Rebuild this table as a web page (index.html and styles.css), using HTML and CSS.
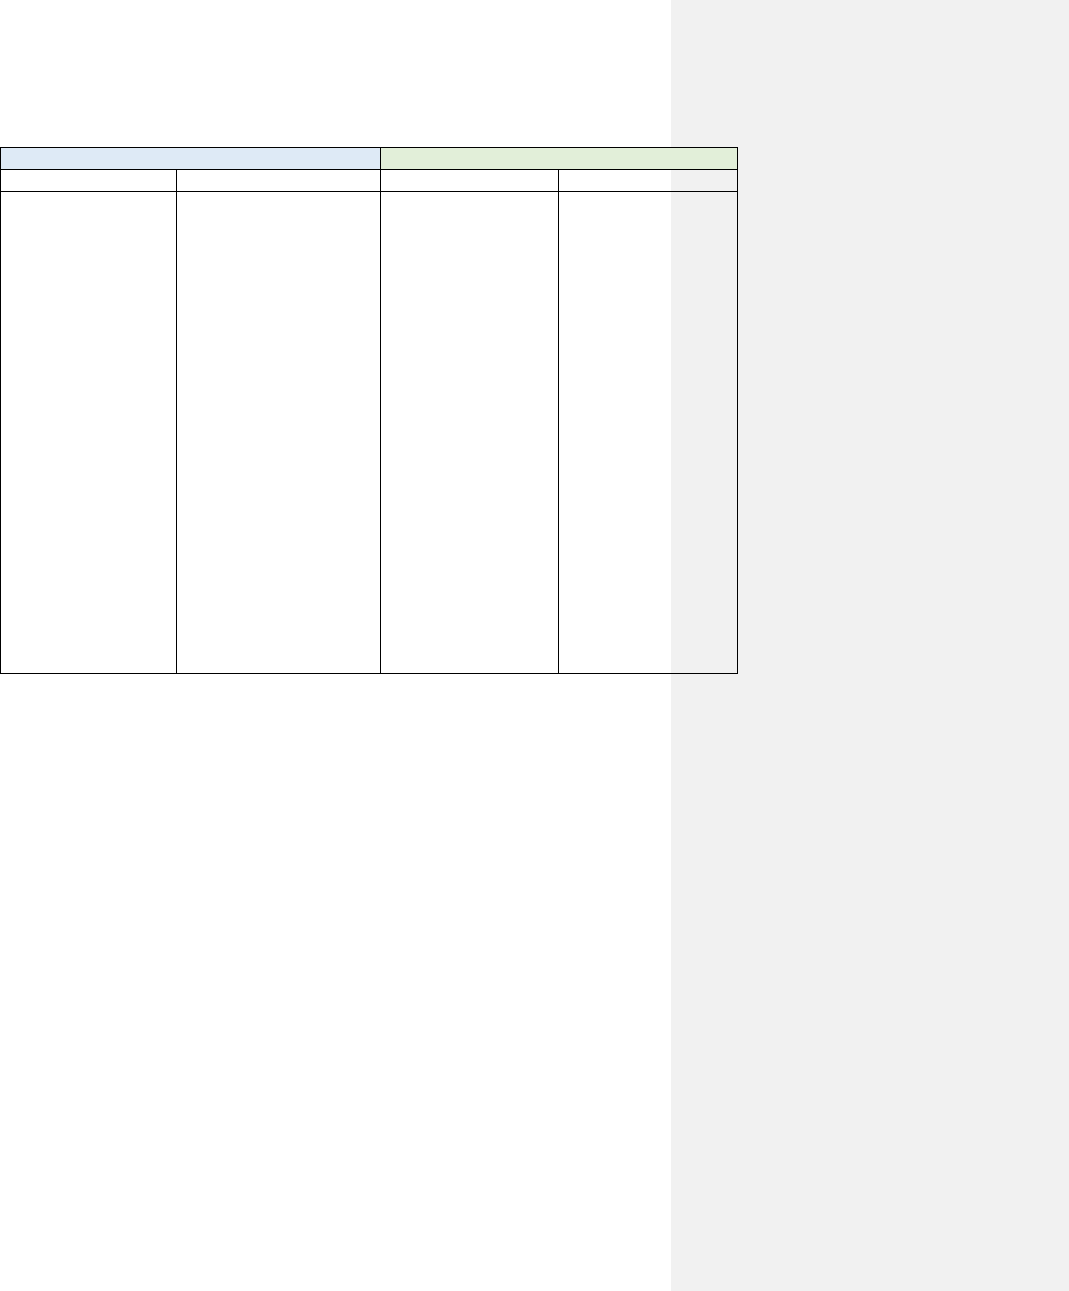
FILE: index.html
```html
<!DOCTYPE html>
<html lang="en">
<head>
    <meta charset="utf-8" />
    <title>Document</title>
    <link rel="stylesheet" href="styles.css">
</head>
<body>
    <div id="page">
        <table id="grid">
            <colgroup>
                <col class="c1">
                <col class="c2">
                <col class="c3">
                <col class="c4">
            </colgroup>
            <tr class="band">
                <td colspan="2" class="blue"></td>
                <td colspan="2" class="green"></td>
            </tr>
            <tr class="heads">
                <td></td>
                <td></td>
                <td></td>
                <td></td>
            </tr>
            <tr class="rows">
                <td></td>
                <td></td>
                <td></td>
                <td></td>
            </tr>
        </table>
    </div>
</body>
</html>
```

FILE: styles.css
```css
html, body {
    margin: 0;
    padding: 0;
}

body {
    font-family: "Liberation Sans", Arial, sans-serif;
}

#page {
    min-height: 1291px;
    padding-top: 147px;
    box-sizing: border-box;
    background: linear-gradient(to right, #ffffff 671px, #f1f1f1 671px);
}

#grid {
    border-collapse: collapse;
    table-layout: fixed;
    width: 738px;
}

#grid td {
    border: 1px solid #000;
    padding: 0;
}

.c1 { width: 176px; }
.c2 { width: 204px; }
.c3 { width: 178px; }
.c4 { width: 179px; }

.band td { height: 21px; }
.heads td { height: 21px; }
.rows td { height: 481px; }

.blue { background: #deeaf6; }
.green { background: #e2efd9; }
```
